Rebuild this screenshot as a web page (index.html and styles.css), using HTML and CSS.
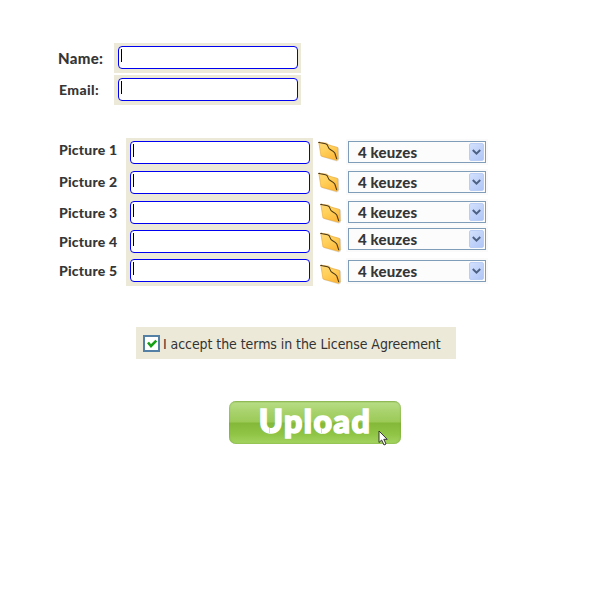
FILE: index.html
```html
<!DOCTYPE html>
<html lang="en">
<head>
<meta charset="utf-8">
<title>Upload</title>
<link rel="stylesheet" href="styles.css">
</head>
<body>
<svg class="defs" width="0" height="0" aria-hidden="true">
  <defs>
    <linearGradient id="gold" x1="0" y1="0" x2="0.6" y2="1"><stop offset="0" stop-color="#ffd878"/><stop offset="0.5" stop-color="#ffd05a"/><stop offset="1" stop-color="#ffb93a"/></linearGradient>
    <symbol id="folder" viewBox="0 0 22 21">
      <path d="M2 4 11 4 13 5 20 6 21.2 8 21 19 19 20.5 4 16Z" fill="#bbb" opacity=".5"/>
      <path d="M.8 1.2 8.5 2.2 11 4 19.5 6.5 20.2 18 18.5 19.2 3 15Z" fill="url(#gold)" stroke="#eeae3c" stroke-width=".7"/>
      <path d="M.3 1.8Q.8 1 2.5 1.8L7.5 2.8Q9.5 3.2 10 5.5T13 9T16.8 12L18.8 18.2" fill="none" stroke="#4b3a1b" stroke-width="1.1"/>
    </symbol>
    <symbol id="chevron" viewBox="0 0 9 7"><path d="M.8 1 4.5 4.7 8.2 1" fill="none" stroke="#4d6185" stroke-width="2"/></symbol>
  </defs>
</svg>
<form class="page">
  <div class="contact">
    <div class="row"><label class="label name">Name:</label><div class="frame"><div class="field"></div></div></div>
    <div class="row"><label class="label email">Email:</label><div class="frame"><div class="field"></div></div></div>
  </div>
  <div class="pictures">
    <div class="labels">
      <label class="label">Picture 1</label><label class="label">Picture 2</label><label class="label">Picture 3</label><label class="label">Picture 4</label><label class="label">Picture 5</label>
    </div>
    <div class="panel">
      <div class="field"></div><div class="field"></div><div class="field"></div><div class="field"></div><div class="field"></div>
    </div>
    <div class="folders">
      <svg><use href="#folder"/></svg><svg><use href="#folder"/></svg><svg><use href="#folder"/></svg><svg><use href="#folder"/></svg><svg><use href="#folder"/></svg>
    </div>
    <div class="selects">
      <div class="select"><span>4 keuzes</span><i><svg><use href="#chevron"/></svg></i></div>
      <div class="select"><span>4 keuzes</span><i><svg><use href="#chevron"/></svg></i></div>
      <div class="select"><span>4 keuzes</span><i><svg><use href="#chevron"/></svg></i></div>
      <div class="select"><span>4 keuzes</span><i><svg><use href="#chevron"/></svg></i></div>
      <div class="select"><span>4 keuzes</span><i><svg><use href="#chevron"/></svg></i></div>
    </div>
  </div>
  <div class="terms">
    <span class="check"><svg viewBox="0 0 12 12"><path d="M2 4.5 5 8 10.3 2.6" fill="none" stroke="#16a016" stroke-width="2.6"/></svg></span>
    <span class="terms-text">I accept the terms in the License Agreement</span>
  </div>
  <div class="upload">
    <span>Upload</span>
    <svg class="cursor" viewBox="0 0 10 16"><path d="M1 1V12.5L3.6 10 6 15 8 14 5.8 9.3H9.2Z" fill="#fff" stroke="#333" stroke-width="1"/></svg>
  </div>
</form>
</body>
</html>
```
FILE: styles.css
```css
* { box-sizing: border-box; }
body { margin: 0; background: #fff; }
.defs { display: block; }
.page { width: 600px; height: 600px; padding-top: 43px; overflow: hidden; }

.label, .select span {
  font: 900 14px/18px Lato, sans-serif;
  letter-spacing: .2px;
  color: #363636;
  white-space: nowrap;
}
.contact { display: flex; flex-direction: column; gap: 2px; }
.row { display: flex; height: 30px; padding-left: 58px; }
.row .label { width: 56px; padding-top: 6px; }
.row .name { font-size: 15px; letter-spacing: .3px; }
.row .email { padding-left: 1px; letter-spacing: .4px; }
.frame { width: 187px; height: 30px; padding: 3px 0 0 4px; background: #ece9d8; }
.field {
  width: 180px;
  height: 23px;
  padding: 2px 0 0 2px;
  background: #fff;
  border: 1px solid #0000f0;
  border-radius: 4px;
}
.field::before { content: ""; display: block; width: 1px; height: 13px; background: #000; }

.pictures { display: flex; height: 148px; margin-top: 33px; padding-left: 59px; }
.labels { width: 67px; padding-top: 3px; }
.labels .label { display: block; height: 18px; margin-bottom: 14px; }
.labels .label:nth-child(2) { margin-bottom: 13px; }
.labels .label:nth-child(3), .labels .label:nth-child(4) { margin-bottom: 11px; }
.panel { width: 187px; height: 148px; padding: 3px 0 0 4px; background: #ece9d8; }
.panel .field { margin-bottom: 7px; }
.panel .field:nth-child(3), .panel .field:nth-child(4) { margin-bottom: 6px; }
.folders { width: 33px; padding: 3px 0 0 5px; }
.folders svg { display: block; width: 22px; height: 21px; margin-bottom: 10px; }
.folders svg:nth-child(n+3) { margin-left: 2px; }
.folders svg:nth-child(3) { margin-bottom: 8px; }
.folders svg:nth-child(4) { margin-bottom: 11px; }
.selects { width: 143px; }
.select {
  display: flex;
  justify-content: space-between;
  width: 138px;
  height: 22px;
  margin: 3px 0 8px 2px;
  padding: 1px 1px 0 9px;
  background: #fcfcfd;
  border: 1px solid #7f9db9;
  box-shadow: 0 0 0 2px #fafafa;
}
.select:nth-child(3) { margin-bottom: 5px; }
.select:nth-child(4) { margin-bottom: 10px; }
.select span { font-size: 15px; letter-spacing: .15px; }
.select i { width: 15px; height: 18px; padding: 5px 0 0 2px; background: linear-gradient(135deg, #d2e0fd, #b0c6f6); border: 1px solid #bacdf5; border-radius: 2px; }
.select i svg { display: block; width: 9px; height: 7px; }

.terms {
  display: flex;
  width: 320px;
  height: 32px;
  margin: 41px 0 0 136px;
  padding: 8px 0 0 7px;
  background: #ece9d8;
}
.check { width: 17px; height: 17px; padding: 1px; background: #fff; border: 2px solid #5480a5; }
.check svg { display: block; width: 12px; height: 12px; }
.terms-text { margin-left: 3px; font: 14px/18px "DejaVu Sans Condensed", "DejaVu Sans", sans-serif; font-stretch: condensed; letter-spacing: -.07px; color: #333; white-space: nowrap; }

.upload {
  position: relative;
  width: 172px;
  height: 43px;
  margin: 42px 0 0 229px;
  padding-left: 29px;
  border-radius: 7px;
  background: linear-gradient(#92bd55 0, #b7dc83 2px, #a6d169 12px, #9cca57 21px, #84b838 22px, #8fc445 33px, #a3d35f 42px);
  box-shadow: inset 0 0 2px #719d3c;
}
.upload span { font: 900 32px/40px Lato, sans-serif; letter-spacing: 1.6px; color: #fff; -webkit-text-stroke: 1.7px #fff; paint-order: stroke fill; margin-left: 1px; }
/* Stencil breaks in the bowls of the letters */
.upload::before, .upload::after {
  content: "";
  position: absolute;
  top: 27px;
  width: 1px;
  height: 5px;
  background: #cfe6b0;
}
.upload::before { left: 40px; }
.upload::after { left: 92px; }
.cursor { position: absolute; left: 149px; top: 29px; width: 10px; height: 16px; }
```
